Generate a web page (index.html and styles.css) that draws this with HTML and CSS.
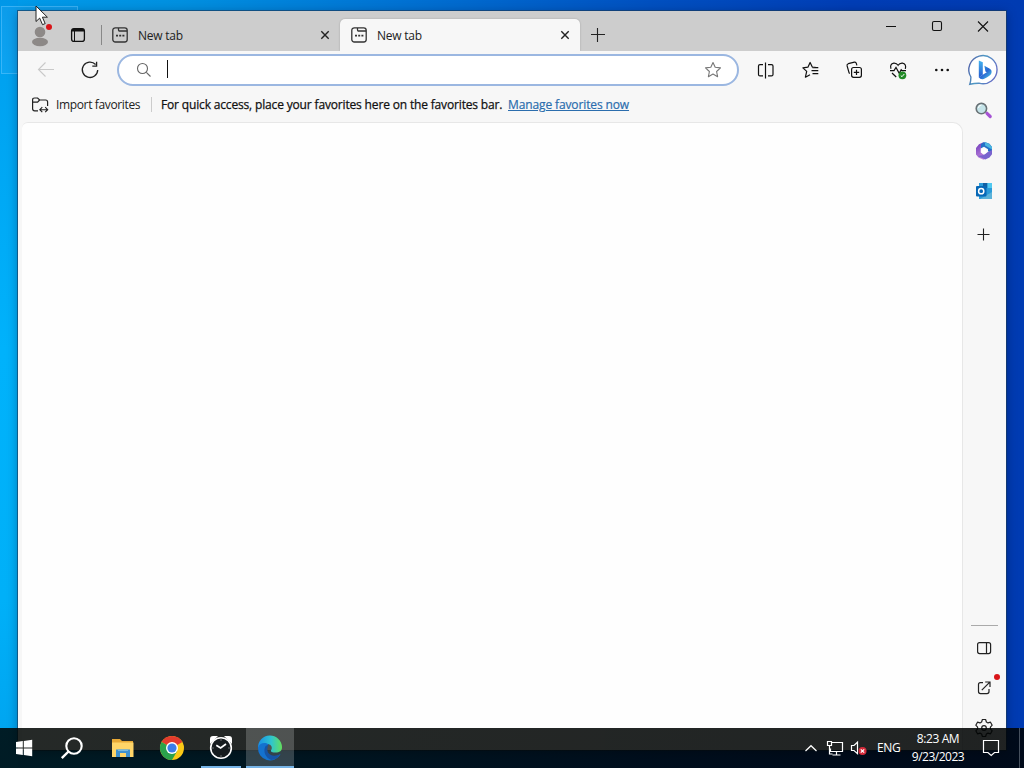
FILE: index.html
```html
<!DOCTYPE html>
<html lang="en">
<head>
<meta charset="utf-8">
<title>New tab</title>
<link rel="stylesheet" href="styles.css">
</head>
<body>
<div class="desktop">
  <div class="selection"></div>
  <div class="window">
    <header class="tabstrip">
      <svg class="profile" width="32" height="40" viewBox="18 11 32 40"><circle cx="40" cy="32" r="5.3" fill="#8d8987"/><ellipse cx="40" cy="42" rx="8" ry="4.2" fill="#8d8987"/></svg>
      <i class="dot profile-dot"></i>
      <svg class="workspace" width="51" height="40" viewBox="50 11 51 40"><rect x="71.6" y="28.6" width="12.8" height="12.8" rx="2.5" fill="none" stroke="#111" stroke-width="1.3"/><path d="M71.6 31.6v-.6q0-2.4 2.4-2.4h8q2.4 0 2.4 2.4v.6z" fill="#111"/><path d="M74.5 31v10.5" stroke="#111"/></svg>
      <i class="divider"></i>
      <div class="tab">
        <svg class="page-icon" width="16" height="16" fill="none" stroke="#333" stroke-width="1.3"><rect x=".8" y=".8" width="14.4" height="14.2" rx="2.5"/><path d="M6.5 1v1.7q0 1.3 1.3 1.3H15"/><path d="M4 8.6h2M7.2 8.6h2M10.4 8.6h2" stroke-width="1.9"/></svg>
        <span class="tab-title">New tab</span>
        <svg class="close" width="10" height="10"><path d="M1.3 1.3l7.4 7.4M8.7 1.3L1.3 8.7" stroke="#222" stroke-width="1.4"/></svg>
      </div>
      <div class="tab active">
        <svg class="page-icon" width="16" height="16" fill="none" stroke="#333" stroke-width="1.3"><rect x=".8" y=".8" width="14.4" height="14.2" rx="2.5"/><path d="M6.5 1v1.7q0 1.3 1.3 1.3H15"/><path d="M4 8.6h2M7.2 8.6h2M10.4 8.6h2" stroke-width="1.9"/></svg>
        <span class="tab-title">New tab</span>
        <svg class="close" width="10" height="10"><path d="M1.3 1.3l7.4 7.4M8.7 1.3L1.3 8.7" stroke="#222" stroke-width="1.4"/></svg>
      </div>
      <svg class="add" width="36" height="40" viewBox="580 11 36 40"><path d="M591 34.5h14M597.5 28v14" stroke="#222" stroke-width="1.1"/></svg>
      <svg class="controls" width="138" height="32" viewBox="868 11 138 32" fill="none" stroke="#111" stroke-width="1.1"><path d="M886 26.5h10M978 21.5l10 10M988 21.5l-10 10"/><rect x="932.5" y="21.5" width="9" height="9" rx="1.5"/></svg>
    </header>
    <div class="body">
      <main class="main">
        <div class="toolbar">
          <svg class="tool" width="44" height="38" viewBox="24 51 44 38" fill="none" stroke="#c9c9c9" stroke-width="1.1"><path d="M54 69.5H38.5M45.5 62.5l-7 7 7 7"/></svg>
          <svg class="tool" width="44" height="38" viewBox="68 51 44 38" fill="none" stroke="#222" stroke-width="1.3"><path d="M97.7 70A7.7 7.7 0 1 1 95.6 64.5M96.6 61.8v4.3h-4.3"/></svg>
          <div class="omnibox">
            <svg width="16" height="16" fill="none" stroke="#666" stroke-width="1.1"><circle cx="6.5" cy="6.5" r="5"/><path d="M10.3 10.3l4.2 4.2"/></svg>
            <i class="caret"></i>
            <svg class="star" width="18" height="18" viewBox="0 0 18 18" fill="none" stroke="#777" stroke-width="1.1"><path d="M9 1.5l2.2 4.8 5.3.6-3.9 3.6 1 5.2L9 13.1l-4.6 2.6 1-5.2-3.9-3.6 5.3-.6z" stroke-linejoin="round"/></svg>
          </div>
          <svg class="tool" width="44" height="38" viewBox="744 51 44 38" fill="none" stroke="#111" stroke-width="1.2"><path d="M765.5 62.5v16M763 64.6h-3q-1.5 0-1.5 1.5v8.3q0 1.5 1.5 1.5h3M768 64.6h3.5q1.5 0 1.5 1.5v8.3q0 1.5-1.5 1.5H768"/></svg>
          <svg class="tool" width="44" height="38" viewBox="788 51 44 38" fill="none" stroke="#111" stroke-width="1.2" stroke-linejoin="round"><path d="M815.5 67.4l-3.2-.3-2.2-4.6-2.2 4.7-5 .7 3.8 3.5-1.3 5.8 4.6-2.5M812.5 67.7h5.8M811.5 70.7h6.8M812.5 73.7h5.8"/></svg>
          <svg class="tool" width="44" height="38" viewBox="832 51 44 38" fill="none" stroke="#111" stroke-width="1.2"><rect x="851.6" y="67.5" width="9.8" height="9.8" rx="2"/><path d="M856.5 69.7v5.4M853.8 72.4h5.4M849.8 73.5l-.7-.5-2-7.1q-.4-1.7 1.2-2.2l6.1-1.5q1.5-.3 1.9 1.1l.6 2"/></svg>
          <svg class="tool" width="44" height="38" viewBox="876 51 44 38" fill="none" stroke="#111" stroke-width="1.2"><path d="M891 68.7q-1.5-4.8 2.8-5.6 2.8-.2 4.3 2.2 1.5-2.4 4.3-2.2 4.3.8 2.9 5.7M890 70.6h4l2-3.2 3.2 5.9 2-3.6 1 .9h3.8M892 73l4.2 4"/><circle cx="902.4" cy="75.3" r="3.9" fill="#218a26" stroke="none"/><path d="M900.8 75.6l1.2 1.1 2.3-2.7" stroke="#fff" stroke-width="1"/></svg>
          <svg class="tool" width="44" height="38" viewBox="920 51 44 38" fill="#111"><circle cx="936.3" cy="70" r="1.3"/><circle cx="942" cy="70" r="1.3"/><circle cx="947.7" cy="70" r="1.3"/></svg>
        </div>
        <div class="favorites">
          <svg width="18" height="16" fill="none" stroke="#222" stroke-width="1.2"><path d="M6 13.8H2.6q-2 0-2-2V2.8Q.6 1 2.6 1h3l2 2h6q2 0 2 2v4M.6 5.2h5L7.6 3"/><path d="M8 12.7h7.5M10.3 10.2l-2.5 2.5 2.5 2.5M13.2 10.2l2.5 2.5-2.5 2.5" stroke-width="1.1"/></svg>
          <span class="import">Import favorites</span>
          <i class="fav-line"></i>
          <span class="hint">For quick access, place your favorites here on the favorites bar.</span>
          <a class="manage">Manage favorites now</a>
        </div>
        <section class="page"></section>
      </main>
      <aside class="sidebar">
        <svg width="43" height="208" viewBox="963 51 43 208">
          <defs>
            <linearGradient id="bubble" x2="1" y2=".4"><stop stop-color="#5358a5"/><stop offset=".5" stop-color="#4f9ac4"/><stop offset="1" stop-color="#6370c4"/></linearGradient>
            <linearGradient id="bing" x2="1" y2="1"><stop stop-color="#36b5e9"/><stop offset=".5" stop-color="#2865d2"/><stop offset="1" stop-color="#51d3e7"/></linearGradient>
            <linearGradient id="stem" x2="0" y2="1"><stop stop-color="#45b4ee"/><stop offset="1" stop-color="#2459cf"/></linearGradient>
            <linearGradient id="office" x2=".5" y2="1"><stop stop-color="#6a38ba"/><stop offset="1" stop-color="#c88bdf"/></linearGradient>
          </defs>
          <path d="M969.8 84.3q1.1-3 1.1-7.3A14.1 14.1 0 1 1 979 83.2q-4-.1-9.2 1.1z" fill="#fff" stroke="url(#bubble)" stroke-width="1.4"/>
          <path d="M978.8 60.4l4 1.8v12.6l-4 2.8z" fill="url(#stem)"/><path d="M984.4 65.8l5 2.6q3.1 1.6 1.9 5-.8 2.3-7.6 5.5-3.2.9-4.9-1.7l8-5-1.4-.8z" fill="url(#bing)"/>
          <path d="M987 113.3l3.2 3.2" stroke="#a653d4" stroke-width="3.2" stroke-linecap="round"/><circle cx="981.4" cy="108.6" r="5.2" fill="#c5e4e9" stroke="#697276" stroke-width="1.6"/><path d="M978.5 108a3 3 0 0 1 3-3" stroke="#fff" fill="none"/>
          <path d="M983.5 142.3l-4.5 2-3 3.6v6.5l2.5 3.1 5 2.3 5.5-3-5.5-2.2-2.8-2v-4l3-3z" fill="url(#office)"/><path d="M983.5 142.3h2l4 1.5 2.5 3.2v6l-4-1.7v-2l-4-2.5-3 1.5v-4z" fill="#246fc7"/><path d="M992 150v4.3l-2.5 3.2-4.2 2-7.5-3.5 6-1 4-3z" fill="#7963ce"/><path d="M985 142.3l4.5 1.7 2.5 3v2.5l-7-4z" fill="#4bb4df"/><circle cx="984" cy="151" r="2.8" fill="#fff"/>
          <path d="M979 183h13v16h-13z" fill="#2b9bd9"/><path d="M983 183h4.5v5H983z" fill="#1260a3"/><path d="M987.5 183h4.5v5h-4.5z" fill="#50c8f0"/><path d="M980 199l12-7v7z" fill="#5bb2d9"/><rect x="976" y="186" width="10.5" height="10.5" rx="1" fill="#0768b6"/><circle cx="981.2" cy="191.2" r="2.6" fill="none" stroke="#fff" stroke-width="1.5"/>
          <path d="M977.5 234.5h12M983.5 228.5v12" stroke="#222" stroke-width="1.1"/>
        </svg>
        <svg width="43" height="132" viewBox="963 618 43 132" fill="none" stroke="#222" stroke-width="1.2">
          <path d="M971 625.5h27" stroke="#aaa" stroke-width="1"/>
          <rect x="977.6" y="642.6" width="13" height="11" rx="2"/><path d="M986.5 643v10.5"/>
          <path d="M983 682.6h-2.6q-1.9 0-1.9 2v7q0 2 2 2h6.5q2 0 2-2V689M981.8 690.2l8-8M985.2 682h4.8v5"/>
          <circle cx="997" cy="677" r="3" fill="#d91519" stroke="none"/>
          <path d="M982.4 719.5h3.2l.8 2.5 1.6.9 2.5-.7 1.7 3-1.8 1.9v1.8l1.8 1.9-1.7 3-2.5-.7-1.6.9-.8 2.5h-3.2l-.8-2.5-1.6-.9-2.5.7-1.7-3 1.8-1.9v-1.8l-1.8-1.9 1.7-3 2.5.7 1.6-.9z" stroke-linejoin="round"/><circle cx="984" cy="728" r="2.3"/>
        </svg>
      </aside>
    </div>
  </div>
  <footer class="taskbar">
    <div class="apps">
      <svg width="48" height="40" viewBox="0 728 48 40"><path d="M16 742l6.8-1v6.4H16zM23.8 740.9l8.4-1.2v7.7h-8.4zM16 748.4h6.8v6.5l-6.8-1zM23.8 748.4h8.4v7.8l-8.4-1.2z" fill="#fff"/></svg>
      <svg width="50" height="40" viewBox="48 728 50 40"><circle cx="74" cy="746" r="7.7" fill="none" stroke="#fff" stroke-width="2.1"/><path d="M68.5 751.5l-6.7 6.7" stroke="#fff" stroke-width="2.4"/></svg>
      <svg width="49" height="40" viewBox="98 728 49 40"><path d="M112 739h8l2 2h11v16h-21z" fill="#e8a936"/><path d="M112 742.5h21.5v14.5H112z" fill="#ffd568"/><path d="M116 757v-7.5h14v7.5h-4v-4h-6v4z" fill="#3f91cf"/><path d="M118 749.5h10v1.5h-10z" fill="#78b9df"/></svg>
      <svg width="49" height="40" viewBox="147 728 49 40"><circle cx="172" cy="748" r="12" fill="#fbc916"/><path d="M161.6 742A12 12 0 0 1 182.4 742L172 748z" fill="#e33b2e"/><path d="M161.6 742A12 12 0 0 0 172 760l5.2-9-5.2-3z" fill="#2ba24c"/><circle cx="172" cy="748" r="6" fill="#fff"/><circle cx="172" cy="748" r="4.6" fill="#3b7de9"/></svg>
      <svg width="50" height="40" viewBox="196 728 50 40"><path d="M210 744v-5q0-3 3-3h5zM232 744v-5q0-3-3-3h-5z" fill="#fff"/><circle cx="221" cy="748" r="10.3" fill="#161c1f" stroke="#fff" stroke-width="1.6"/><path d="M216.3 745.3l4.3 2.7 5.4-4" stroke="#fff" stroke-width="1.7" fill="none"/><path d="M221 739.5v1M221 755.5v1M212.5 748h1M228.5 748h1" stroke="#bbb"/><path d="M201 766h40v2h-40z" fill="#76b4e7"/></svg>
      <svg class="current" width="48" height="40" viewBox="246 728 48 40"><defs><linearGradient id="wave" x2="1"><stop stop-color="#188ee8"/><stop offset=".55" stop-color="#2fc5cf"/><stop offset="1" stop-color="#63df5d"/></linearGradient></defs><path d="M258 748a12 12 0 0 1 24-1c.3 4-3 5.7-7 5.5-4 0-5-1.5-3.4-3.3 1-3-1.5-5.3-5-5.2-4 0-7 2.5-8.6 4z" fill="url(#wave)"/><path d="M258 748c1-5 7-6.3 10.5-3.6-4 2.5-4 9.7 1.5 11.5 4 1.5 8-.2 10.5-1.7A12 12 0 0 1 258 748z" fill="#1472cf"/><path d="M265.6 746c-3 5 0 12.2 5.6 14A12 12 0 0 0 280.5 754c-5 2.8-10.5 2-12.5-1.5-1.2-2.5-.7-5 .5-8z" fill="#1654a5"/><path d="M246 766h48v2h-48z" fill="#76b4e7"/></svg>
    </div>
    <div class="tray">
      <svg width="72" height="40" viewBox="798 728 72 40" fill="none" stroke="#fff" stroke-width="1.2"><path d="M805.5 751l5.5-5.3 5.5 5.3"/><path d="M832 742.5h10.5v9h-12v-3M836.5 751.5v3.5M832.5 755h8M827.5 741.5h4v4h-4zM829.5 745.5v8.5h3"/><path d="M851.5 745.5h2.5l3.5-3.3v11.5l-3.5-3.2h-2.5z"/><circle cx="862.5" cy="751" r="4" fill="#d52b3a" stroke="none"/><path d="M860.8 749.3l3.4 3.4M864.2 749.3l-3.4 3.4"/></svg>
      <span class="language">ENG</span>
      <div class="clock"><span class="time">8:23 AM</span><span class="date">9/23/2023</span></div>
      <svg width="38" height="40" viewBox="971 728 38 40"><path d="M983.5 740.5h15v12h-4l-3.3 3-3.3-3h-4.4z" fill="none" stroke="#fff" stroke-width="1.2"/></svg>
      <i class="show-desktop"></i>
    </div>
  </footer>
  <svg class="cursor" width="14" height="22"><path d="M1 1v15.5l3.7-3.4 2.8 6.6 2.7-1.1-2.8-6.4h5z" fill="#fff" stroke="#222"/></svg>
</div>
</body>
</html>
```

FILE: styles.css
```css
* { box-sizing: border-box; }
body { margin: 0; font-family: "Open Sans", "Noto Sans", sans-serif; font-size: 12px; color: #222; }
svg { display: block; flex: none; }
.desktop { position: relative; width: 1024px; height: 768px; overflow: hidden; background: linear-gradient(#0097e8 0, #00a2f0 80px, #00b2fb 350px, #00b0f8 600px, #00a2ee) 0 0 / 18px 100% no-repeat, linear-gradient(90deg, #009bea 0, #0090e0 180px, #0072d3 400px, #0050c0 650px, #003db5 850px, #003bb2 1024px); }
.selection { position: absolute; left: 1px; top: 6px; width: 77px; height: 68px; background: rgba(100,190,255,.12); border: 1px solid rgba(100,200,255,.5); }
.window { position: absolute; left: 18px; top: 11px; width: 988px; height: 739px; display: flex; flex-direction: column; background: #f7f7f7; box-shadow: 0 0 0 1px rgba(25,60,95,.65), 0 2px 10px rgba(0,0,30,.35); }
.tabstrip { position: relative; display: flex; height: 40px; background: #cdcdcd; }
.dot { width: 6px; height: 6px; border-radius: 50%; background: #d91519; }
.profile-dot { position: absolute; left: 28px; top: 13px; }
.divider { width: 1px; height: 20px; margin-top: 14px; background: #888; }
.tab { display: flex; align-items: center; width: 238px; height: 32px; margin-top: 8px; padding: 0 10px; }
.tab.active { width: 240px; background: #f7f7f7; border-radius: 5px 5px 0 0; box-shadow: 0 0 2px rgba(0,0,0,.22); clip-path: inset(-2px -2px 0 -2px); }
.tab.active .page-icon { margin-left: 1px; }
.tab-title { margin-left: 10px; padding-top: 1px; line-height: 18px; letter-spacing: -.22px; }
.close { margin-left: auto; }
.controls { margin-left: auto; }
.body { display: flex; flex: 1; min-height: 0; }
.main { display: flex; flex-direction: column; width: 945px; }
.toolbar { display: flex; height: 38px; margin-right: -1px; padding-left: 6px; }
.omnibox { display: flex; align-items: center; width: 622px; height: 32px; margin: 3px 5px 0; padding: 0 15px 0 17px; border: 2px solid #9bb7e1; border-radius: 16px; background: #fff; }
.caret { width: 1px; height: 18px; margin: -2px 0 0 15px; background: #111; }
.star { margin-left: auto; }
.favorites { display: flex; align-items: center; height: 33px; padding: 0 0 2px 14px; white-space: nowrap; }
.import { width: 95px; margin-left: 6px; letter-spacing: -.36px; }
.fav-line { width: 1px; height: 15px; background: #ccc; }
.hint { width: 347px; margin-left: 9px; -webkit-text-stroke: .25px #111; letter-spacing: -.16px; color: #111; }
.manage { color: #2b6dad; -webkit-text-stroke: .2px #2b6dad; text-decoration: underline; letter-spacing: -.12px; }
.page { flex: 1; margin-left: 4px; background: #fefefe; border: solid #e7e7e7; border-width: 1px 1px 0 0; border-radius: 6px 10px 0 0; }
.sidebar { display: flex; flex-direction: column; justify-content: space-between; width: 43px; }
.taskbar { position: absolute; left: 0; bottom: 0; width: 1024px; height: 40px; display: flex; justify-content: space-between; color: #fff; background: linear-gradient(90deg, rgba(0,5,3,.855), rgba(0,3,3,.87)); }
.apps, .tray { display: flex; }
.current { background: rgba(255,255,255,.2); }
.language { width: 33px; margin-left: 7px; line-height: 39px; letter-spacing: -.4px; }
.clock { display: flex; flex-direction: column; align-items: center; width: 56px; margin-right: 5px; line-height: 18px; padding-top: 2px; white-space: nowrap; letter-spacing: -.4px; }
.date { letter-spacing: -.5px; }
.show-desktop { width: 5px; border-left: 1px solid #46505d; margin-left: 10px; }
.cursor { position: absolute; left: 35px; top: 5px; }
```
